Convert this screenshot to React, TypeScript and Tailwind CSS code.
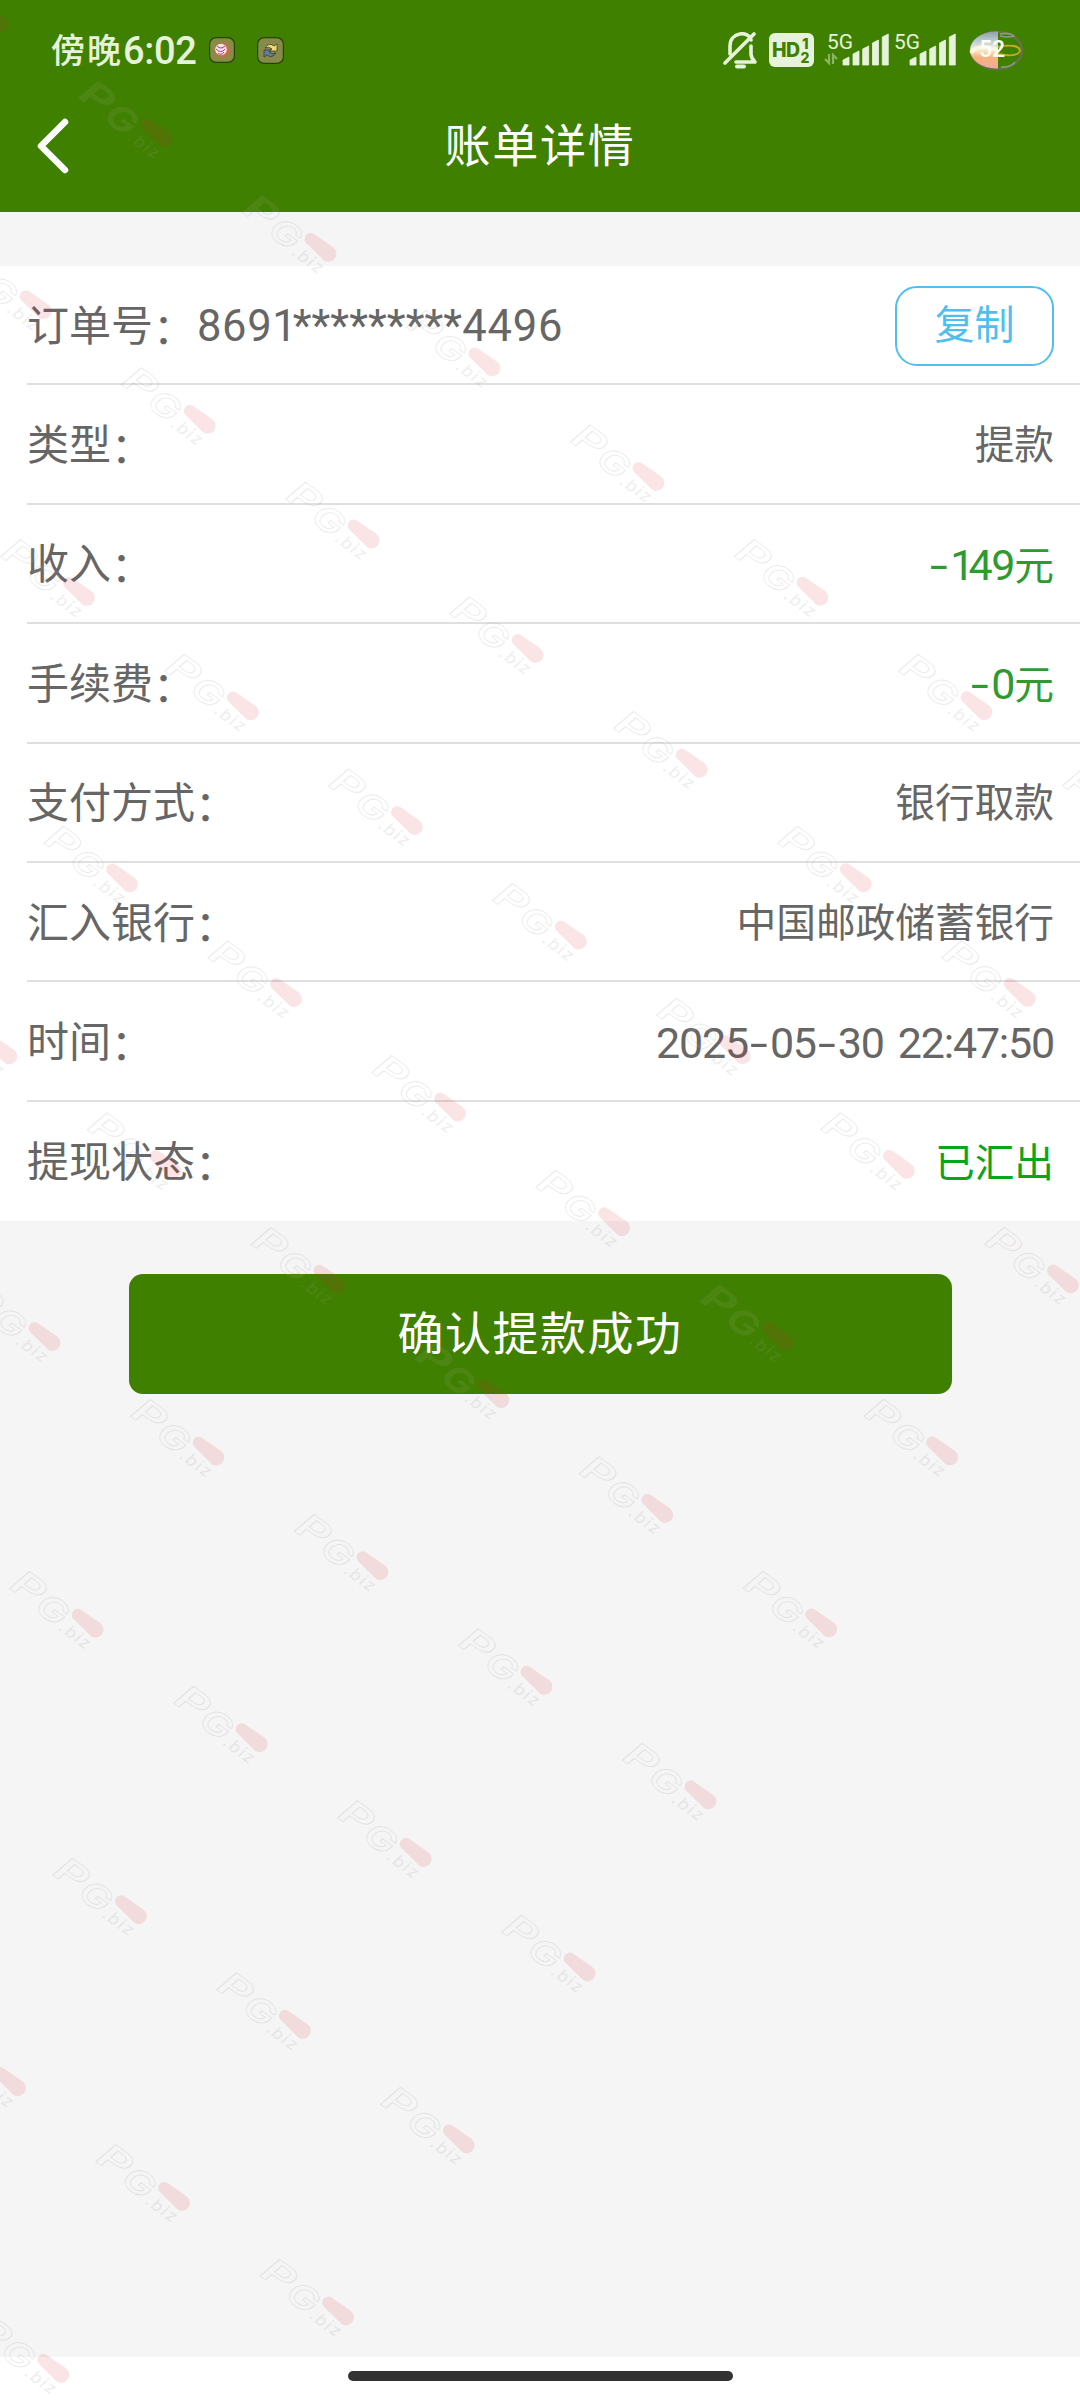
import React from "react";

interface IRow {
  label: string;
  value: string;
  className: string;
}

const rows: IRow[] = [
  { label: "类型", value: "提款", className: "text-[#666666]" },
  { label: "收入", value: "-149元", className: "text-[#2f9a2f]" },
  { label: "手续费", value: "-0元", className: "text-[#2f9a2f]" },
  { label: "支付方式", value: "银行取款", className: "text-[#666666]" },
  { label: "汇入银行", value: "中国邮政储蓄银行", className: "text-[#666666]" },
  { label: "时间", value: "2025-05-30 22:47:50", className: "text-[#666666]" },
  { label: "提现状态", value: "已汇出", className: "text-[#0aa51a]" },
];

const App = () => {
  return (
    <div className="relative flex h-[2400px] w-[1080px] flex-col overflow-hidden bg-[#f5f5f5] font-[Roboto,'Noto_Sans_CJK_SC',sans-serif]">
      <header className="h-[212px] shrink-0 bg-[#3f8000] text-white">
        <StatusBar />
        <TitleBar />
      </header>

      <section className="mt-[54px] bg-white text-[#666666]">
        <div className="ml-[27px] flex h-[119.4px] items-center justify-between border-b-2 border-[#dfdfdf] pt-[2px] pr-[26px]">
          <span className="flex items-center pt-[3px] text-[42px] leading-none whitespace-pre">
            <Label text="订单号" />
            <span className="ml-[2px] flex text-[43.5px]">
              <span className="tracking-[0.6px]">869</span>
              <span className="tracking-[-4px]">1</span>
              <span className="tracking-[0.1px]">*********</span>
              <span className="tracking-[0.8px]">4496</span>
            </span>
          </span>
          <button className="h-[80px] w-[159px] rounded-[22px] border-2 border-[#50bfee] text-[40px] leading-none text-[#50bfee]">
            复制
          </button>
        </div>
        {rows.map((row, index) => (
          <Row row={row} last={index === rows.length - 1} key={row.label} />
        ))}
      </section>

      <button className="mx-auto mt-[53px] h-[120px] w-[823px] shrink-0 rounded-[14px] bg-[#3f8000] text-[46px] leading-none tracking-[1.5px] text-white">
        确认提款成功
      </button>

      <footer className="mt-auto flex h-[43px] shrink-0 justify-center bg-white pt-[14px]">
        <div className="h-[10px] w-[385px] rounded-full bg-[#333333]" />
      </footer>

      <Watermarks />
    </div>
  );
};

const Label: React.FC<{ text: string }> = ({ text }) => (
  <span className="text-[42px] leading-none">
    {text}
    <span className="inline-block translate-y-[3px]">：</span>
  </span>
);

const charClass = (char: string) => {
  if (char === "-") return "inline-block w-[22px] scale-x-150 text-center text-[43px]";
  if (char === "1") return "text-[43px] tracking-[-6px]";
  if (char === " ") return "inline-block w-[14px]";
  if (/[\d:]/.test(char)) return "text-[43px] tracking-[-1.2px]";
  return "";
};

const Row: React.FC<{ row: IRow; last: boolean }> = ({ row, last }) => {
  return (
    <div
      className={
        "ml-[27px] flex h-[119.4px] items-center justify-between pt-[4px] pr-[26px] " +
        (last ? "" : "border-b-2 border-[#dfdfdf]")
      }
    >
      <Label text={row.label} />
      <span className={"text-[39.7px] leading-none whitespace-pre " + row.className}>
        {row.value.split("").map((char, i) => (
          <span className={charClass(char)} key={i}>
            {char}
          </span>
        ))}
      </span>
    </div>
  );
};

const TitleBar = () => {
  return (
    <div className="grid h-[112px] grid-cols-[1fr_auto_1fr] items-start">
      <svg className="mt-[17px] ml-[36px] h-[58px] w-[36px]" viewBox="0 0 36 58" fill="none">
        <path d="M29 5 L5 29 L29 53" stroke="white" strokeWidth="6.5" strokeLinecap="round" strokeLinejoin="round" />
      </svg>
      <h1 className="mt-[23px] text-[46px] leading-none tracking-[1.7px]">账单详情</h1>
    </div>
  );
};

const StatusBar = () => {
  return (
    <div className="flex h-[100px] items-center justify-between pr-[56px] pl-[51px] text-[#e6f3da]">
      <div className="flex items-center font-medium">
        <span className="pt-[2px] text-[34px] leading-none tracking-[2px]">傍晚</span>
        <span className="pt-[2px] text-[38px] leading-none tracking-[-0.3px]">6:02</span>
        <svg className="ml-[12px] h-[26px] w-[26px]" viewBox="0 0 26 26">
          <rect x="0.6" y="0.6" width="24.8" height="24.8" rx="6.5" fill="#8a8c46" stroke="#25430a" strokeWidth="1.2" />
          <circle cx="13" cy="13" r="7" fill="#d9654a" />
          <circle cx="12" cy="12.5" r="5.8" fill="#f4e2ea" />
          <path d="M8 9 q4 4 8 0 M7 12 q5 5 9 0 M9 16 q3 3 6 -1" fill="none" stroke="#a84372" strokeWidth="1" />
        </svg>
        <svg className="ml-[22px] h-[27px] w-[27px]" viewBox="0 0 27 27">
          <rect x="0.6" y="0.6" width="25.8" height="25.8" rx="6.5" fill="#868b4a" stroke="#25430a" strokeWidth="1.2" />
          <path d="M8 11 Q12 5 17 9 L20 7 V14 H13 L15 12 Q12 9 8 11Z" fill="#f2d978" stroke="#34331e" strokeWidth="0.7" />
          <path d="M19 16 Q15 22 10 18 L7 20 V13 H14 L12 15 Q15 18 19 16Z" fill="#647b98" stroke="#29323a" strokeWidth="0.7" />
        </svg>
      </div>
      <div className="flex items-center">
        <MuteIcon />
        <HdIcon />
        <Signal arrows />
        <Signal />
        <Battery />
      </div>
    </div>
  );
};

const MuteIcon = () => (
  <svg className="h-[37px] w-[35px]" viewBox="0 0 35 37" fill="none" stroke="currentColor" strokeWidth="3.6" strokeLinecap="round" strokeLinejoin="round">
    <path d="M7 22 V14 C7 -0.5 26 -1.5 28 8" />
    <path d="M28 14 V22 Q28 26 32 30 H13" />
    <path d="M2 31 L31 2" />
    <path d="M14 34.6 H21" strokeWidth="4" />
  </svg>
);

const HdIcon = () => (
  <svg className="ml-[11px] h-[34px] w-[45px]" viewBox="0 0 45 34" fontFamily="Inter, sans-serif" fontWeight="800">
    <rect width="45" height="34" rx="6" fill="currentColor" />
    <g fill="#3f8000">
      <text x="3" y="23.5" fontSize="19.5" textLength="28">HD</text>
      <text x="33" y="16" fontSize="15">1</text>
      <text x="31.5" y="29.5" fontSize="14">2</text>
    </g>
  </svg>
);

const bars = [
  { x: 19, h: 7 },
  { x: 29, h: 13 },
  { x: 38.7, h: 18 },
  { x: 48.5, h: 24 },
  { x: 58.3, h: 30 },
];

const Signal: React.FC<{ arrows?: boolean }> = ({ arrows }) => (
  <svg className={(arrows ? "ml-[10px] " : "ml-[2px] ") + "h-[34px] w-[65px] overflow-visible"} viewBox="0 0 65 34" fill="currentColor">
    <text x="3" y="15.5" fontSize="20" fontFamily="Roboto, sans-serif" textLength="26" lengthAdjust="spacingAndGlyphs">
      5G
    </text>
    {arrows && (
      <path d="M5 21 V30 L1 26 M9 31 V22 L13 26" fill="none" stroke="#8ab464" strokeWidth="2.2" />
    )}
    {bars.map((b) => (
      <path key={b.x} d={`M${b.x} ${32} V${34 - b.h} L${b.x + 6} ${31 - b.h} V${32} Z`} stroke="currentColor" strokeWidth="0.8" strokeLinejoin="round" />
    ))}
  </svg>
);

const Battery = () => (
  <svg className="ml-[12px] h-[42px] w-[56px]" viewBox="0 0 56 42">
    <defs>
      <clipPath id="charge">
        <rect width="30" height="42" />
      </clipPath>
      <linearGradient id="planet" x1="0" y1="0" x2="0" y2="1">
        <stop offset="0" stopColor="#8fa0a6" />
        <stop offset="0.3" stopColor="#c3d3da" />
        <stop offset="0.5" stopColor="#f7ecd2" />
        <stop offset="0.7" stopColor="#f7b27c" />
        <stop offset="1" stopColor="#eeab9c" />
      </linearGradient>
    </defs>
    <ellipse cx="28.5" cy="21.5" rx="25.5" ry="18.5" fill="none" stroke="#66704f" strokeWidth="2.5" />
    <path d="M32 5 Q42 3 46 7 Q39 9 32 7 M33 38 Q42 39 47 33" fill="none" stroke="#8b9a84" strokeWidth="1.6" />
    <ellipse cx="28" cy="21" rx="26" ry="18.5" fill="url(#planet)" clipPath="url(#charge)" />
    <path d="M3 24 Q9 14 30 21" fill="none" stroke="#fbf6e2" strokeWidth="4" clipPath="url(#charge)" />
    <path d="M30 18 C43 15 52 17 52 22 C50 27 40 27 30 25" fill="none" stroke="#c4ad1e" strokeWidth="1.8" />
    <text x="11" y="28" fontSize="23" fontWeight="500" fontFamily="Roboto, sans-serif" fill="#fffef4" textLength="26">
      52
    </text>
  </svg>
);

// The stamp repeats along two skewed directions and is drawn over everything
const marks: { x: number; y: number }[] = [];
for (let d = -1; d <= 7; d++) {
  for (let j = 0; j < 10; j++) {
    const x = 78 + d * 164 - j * 120.8;
    const y = 80 + d * 114.6 + j * 172;
    if (x > -96 && x < 1080 && y > -60) marks.push({ x, y });
  }
}

const Watermarks = () => (
  <svg className="pointer-events-none absolute inset-0 h-[2400px] w-[1080px]" viewBox="0 0 1080 2400">
    {marks.map(({ x, y }, i) => (
      <g key={i} transform={`translate(${x} ${y + 18}) rotate(36)`} fontFamily="Inter, sans-serif">
        <g fill="#ffffff" fillOpacity="0.06" stroke="#888888" strokeOpacity="0.16" strokeWidth="1">
          <text x="-1" y="0" fontSize="35" fontWeight="600" fontStyle="italic" textLength="32" lengthAdjust="spacingAndGlyphs">P</text>
          <text x="32" y="3" fontSize="33" fontWeight="600" fontStyle="italic" textLength="31" lengthAdjust="spacingAndGlyphs">G</text>
        </g>
        <path d="M71 -25 L94 -25.5 A8 8 0 0 1 94 -9.5 L71 -13 A6 6 0 0 1 71 -25Z" fill="#e0242f" fillOpacity="0.12" />
        <text x="64" y="5" fontSize="17" fontWeight="500" fontStyle="italic" fill="#999999" fillOpacity="0.17" textLength="34">
          .biz
        </text>
      </g>
    ))}
  </svg>
);

export default App;
